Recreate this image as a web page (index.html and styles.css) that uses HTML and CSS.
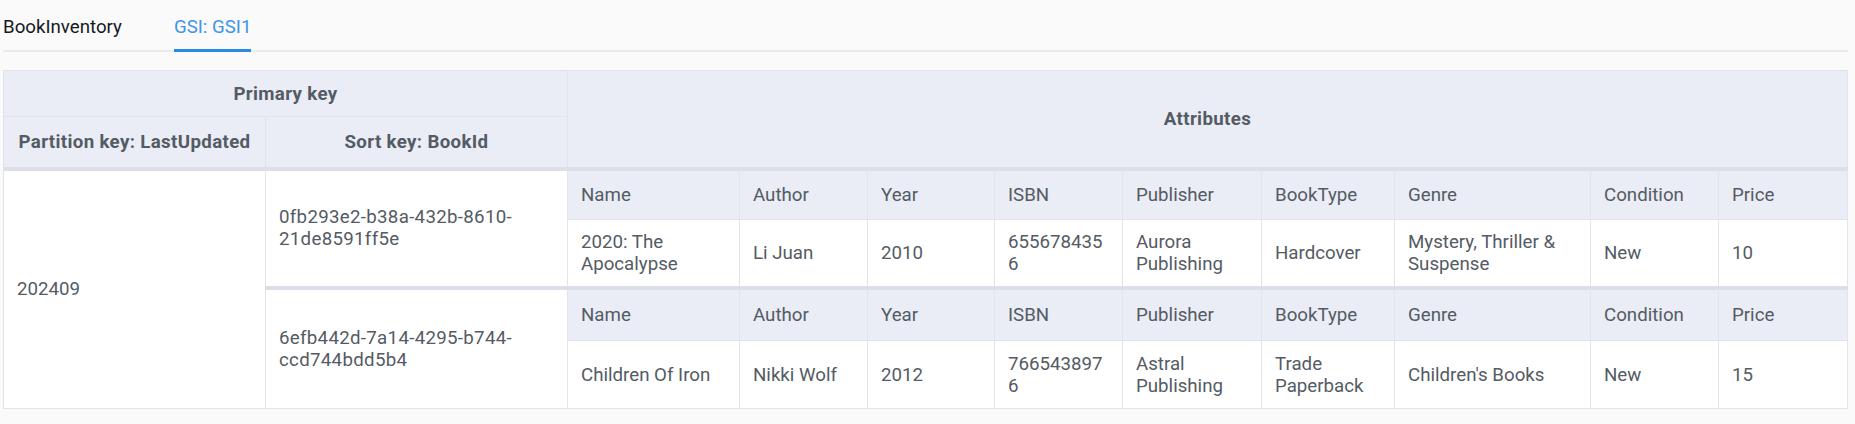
FILE: index.html
```html
<!DOCTYPE html>
<html>
<head>
<meta charset="utf-8">
<link rel="stylesheet" href="styles.css">
</head>
<body>
<div class="page">
  <div class="tabs">
    <div class="tab">BookInventory</div>
    <div class="tab active">GSI: GSI1</div>
  </div>
  <table class="grid">
    <colgroup>
      <col class="c-pk"><col class="c-sk">
      <col class="c-name"><col class="c-author"><col class="c-year"><col class="c-isbn"><col class="c-pub"><col class="c-type"><col class="c-genre"><col class="c-cond"><col class="c-price">
    </colgroup>
    <thead>
      <tr class="h1"><th colspan="2">Primary key</th><th colspan="9" rowspan="2">Attributes</th></tr>
      <tr class="h2"><th>Partition key: LastUpdated</th><th>Sort key: BookId</th></tr>
    </thead>
    <tbody>
      <tr class="sub group sub-a">
        <td rowspan="4" class="key">202409</td>
        <td rowspan="2" class="key sk">0fb293e2-b38a-432b-8610-21de8591ff5e</td>
        <td>Name</td><td>Author</td><td>Year</td><td>ISBN</td><td>Publisher</td><td>BookType</td><td>Genre</td><td>Condition</td><td>Price</td>
      </tr>
      <tr class="val">
        <td>2020: The Apocalypse</td><td>Li Juan</td><td>2010</td><td>6556784356</td><td>Aurora Publishing</td><td>Hardcover</td><td>Mystery, Thriller &amp; Suspense</td><td>New</td><td>10</td>
      </tr>
      <tr class="sub group sub-b">
        <td rowspan="2" class="key sk">6efb442d-7a14-4295-b744-ccd744bdd5b4</td>
        <td>Name</td><td>Author</td><td>Year</td><td>ISBN</td><td>Publisher</td><td>BookType</td><td>Genre</td><td>Condition</td><td>Price</td>
      </tr>
      <tr class="val">
        <td>Children Of Iron</td><td>Nikki Wolf</td><td>2012</td><td>7665438976</td><td>Astral Publishing</td><td>Trade Paperback</td><td>Children's Books</td><td>New</td><td>15</td>
      </tr>
    </tbody>
  </table>
</div>
</body>
</html>
```
FILE: styles.css
```css
html, body {
  margin: 0;
  padding: 0;
  background: #fafafa;
}
body {
  font-family: Roboto, "Liberation Sans", sans-serif;
  font-size: 18.7px;
  color: #545b64;
}
.page {
  padding: 0 7px 0 3px;
}
.tabs {
  display: flex;
  gap: 52px;
  padding-top: 16px;
  border-bottom: 2px solid #e9ebef;
}
.tab {
  line-height: 22px;
  padding-bottom: 11px;
  color: #16191f;
  margin-bottom: -2px;
  border-bottom: 3px solid transparent;
}
.tab.active {
  color: #3e95ea;
  border-bottom-color: #2a8be6;
}
.grid {
  margin-top: 18px;
  border-collapse: collapse;
  table-layout: fixed;
  width: 1845px;
  background: #fff;
}
.c-pk { width: 262px; }
.c-sk { width: 302px; }
.c-name { width: 172px; }
.c-author { width: 128px; }
.c-year { width: 127px; }
.c-isbn { width: 128px; }
.c-pub { width: 139px; }
.c-type { width: 133px; }
.c-genre { width: 196px; }
.c-cond { width: 128px; }
.c-price { width: 129px; }
.grid th, .grid td {
  border: 1px solid #e1e4ec;
  padding: 0 13px;
  line-height: 22px;
  vertical-align: middle;
  text-align: left;
  overflow-wrap: anywhere;
}
.grid th {
  background: #eaedf5;
  font-weight: 700;
  text-align: center;
  color: #545b64;
  letter-spacing: 0.35px;
}
.h1 { height: 46px; }
.h2 { height: 52px; }
.sub td {
  background: #eaedf5;
}
.sub-a { height: 51px; }
.sub-b { height: 53px; }
.val { height: 68px; }
.grid td.key {
  background: #fff;
}
.grid td.sk {
  letter-spacing: 0.3px;
}
.group td {
  border-top: 4px solid #dcdfe7;
}
```
